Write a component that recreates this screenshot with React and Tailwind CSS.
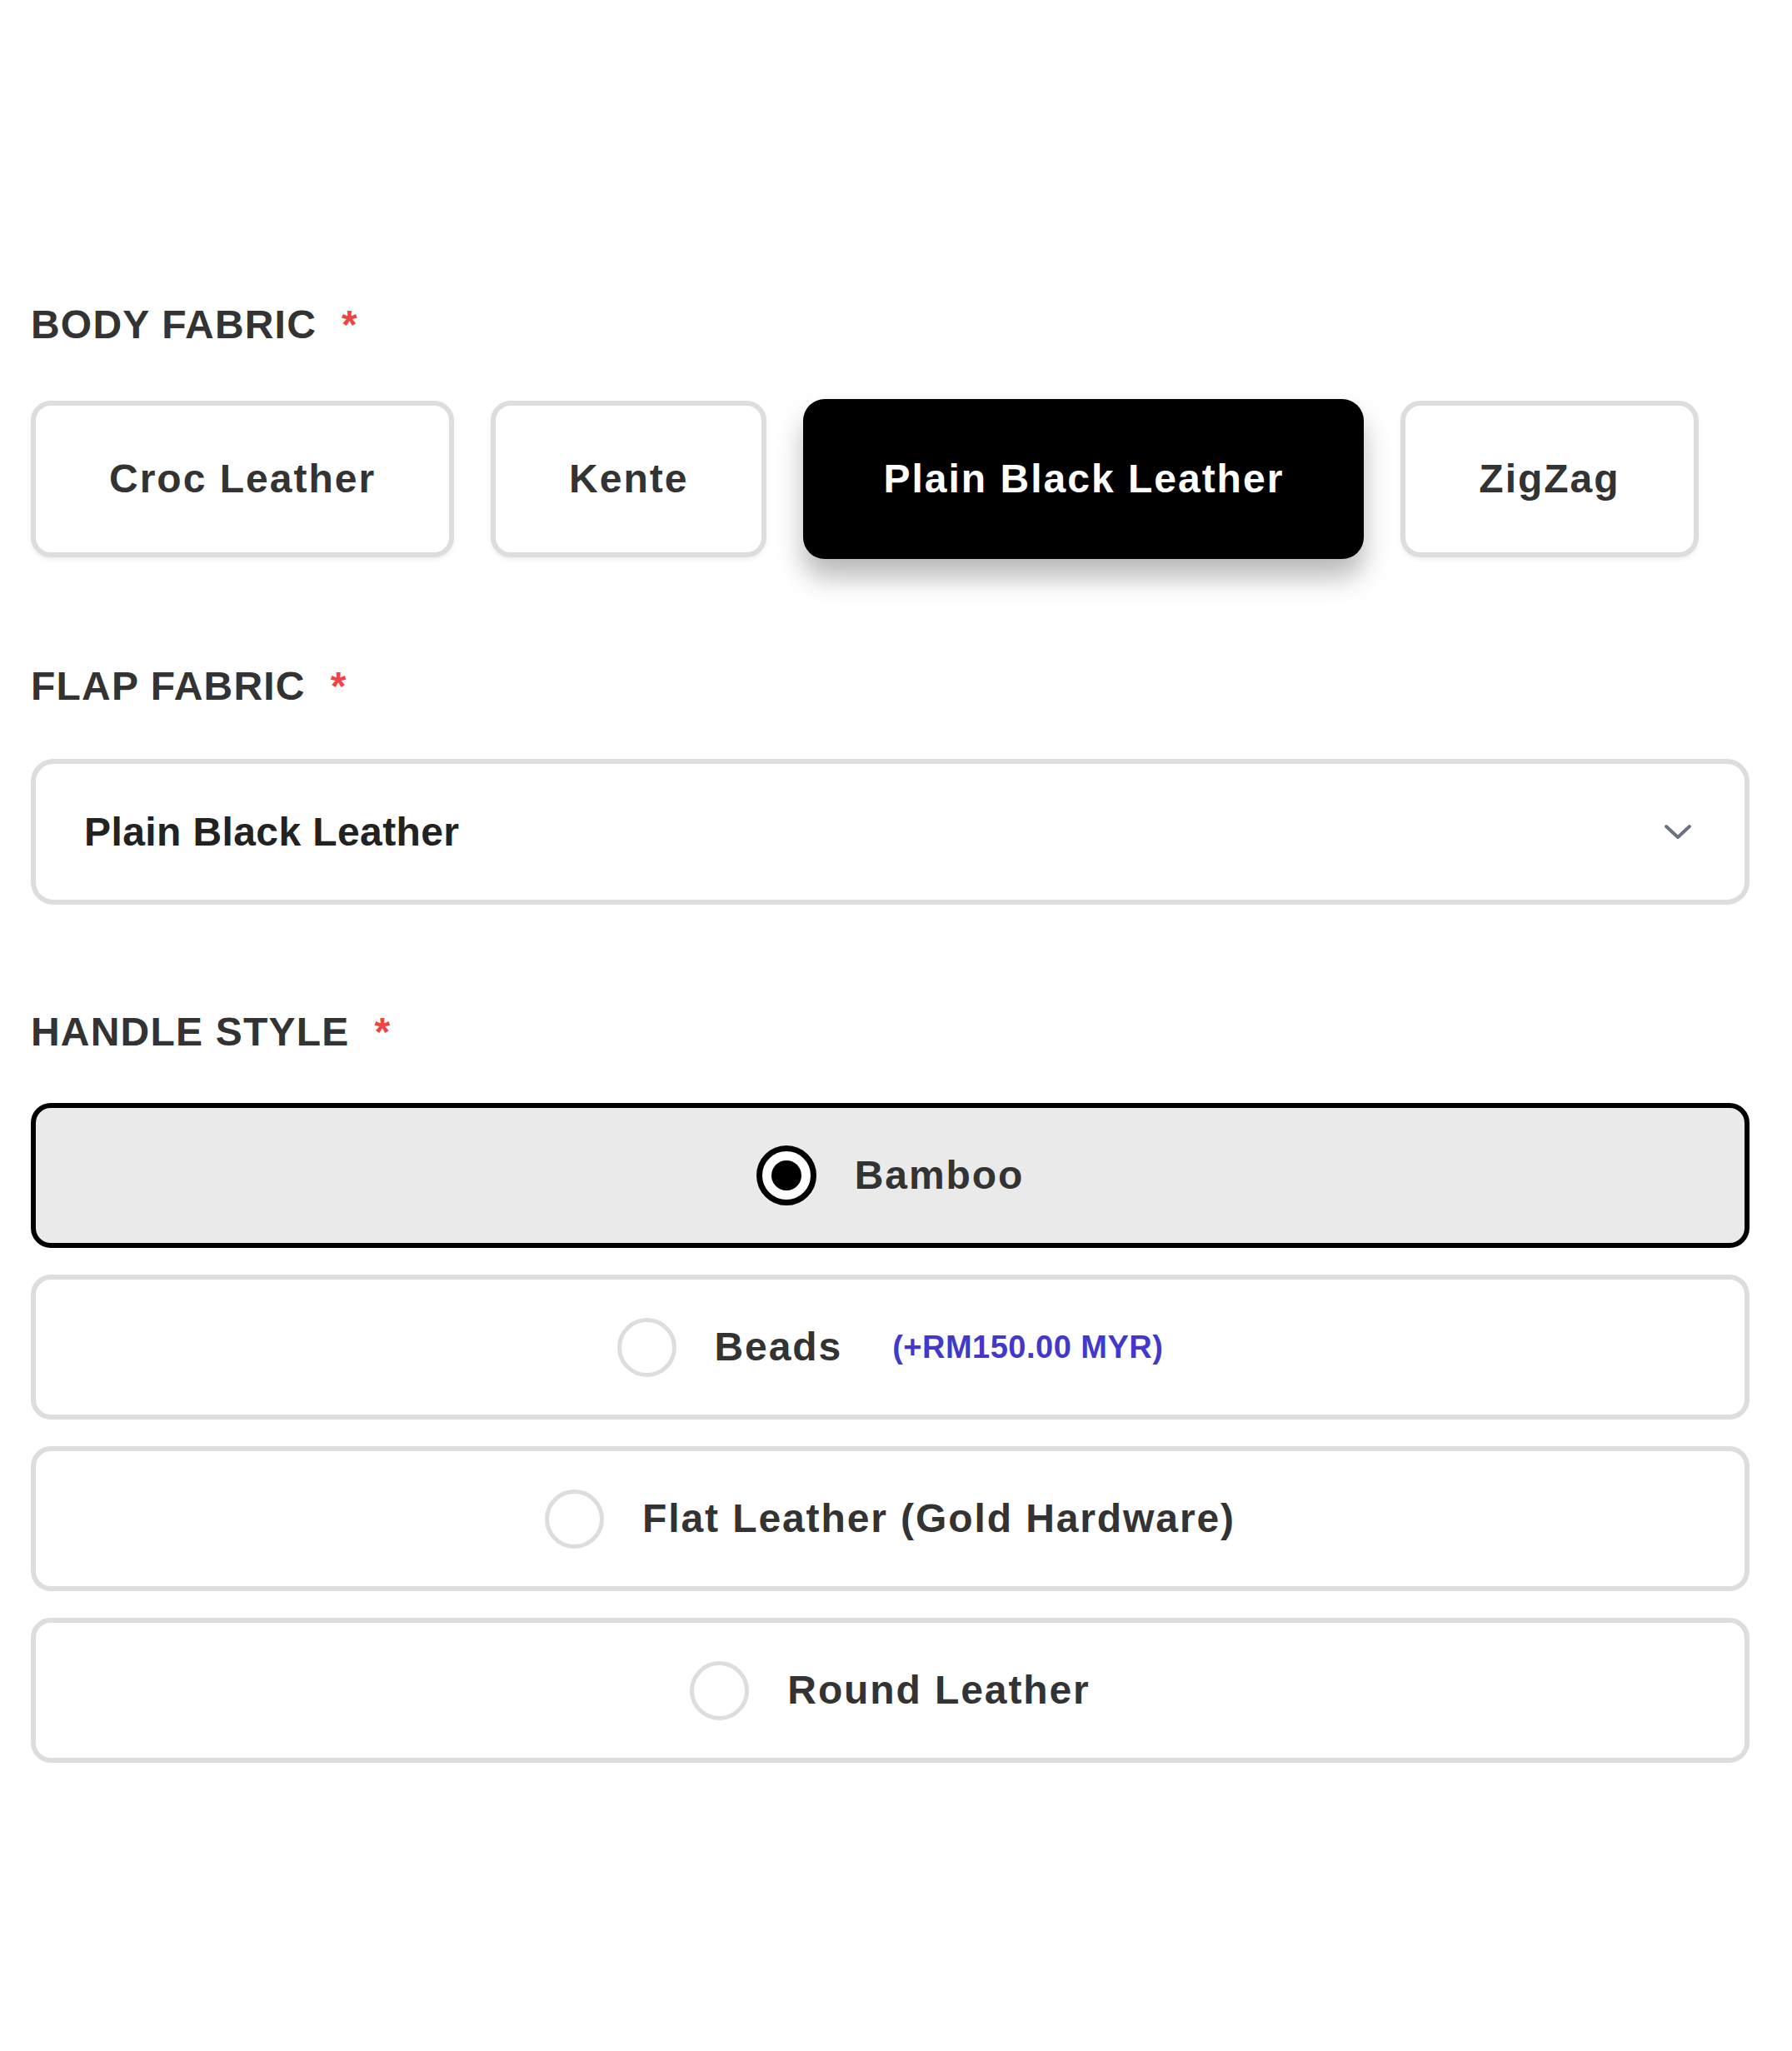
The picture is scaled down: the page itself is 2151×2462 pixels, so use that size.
import React from 'react'

const bodyFabrics = ['Croc Leather', 'Kente', 'Plain Black Leather', 'ZigZag']

const handleStyles = [
    { name: 'Bamboo' },
    { name: 'Beads', price: '(+RM150.00 MYR)' },
    { name: 'Flat Leather (Gold Hardware)' },
    { name: 'Round Leather' },
]

function Label({ children }) {
    return (
        <div className="h-[58px] leading-[58px] flex items-center text-[48px] font-bold uppercase tracking-[1.2px] text-[#333333]">
            <span>{children}</span>
            <span className="ml-[30px] text-[#ef4444]">*</span>
        </div>
    )
}

function Radio({ checked }) {
    if (checked) {
        return (
            <div className="w-[72px] h-[72px] rounded-full border-[7px] border-black bg-white flex items-center justify-center shrink-0">
                <div className="w-[36px] h-[36px] rounded-full bg-black" />
            </div>
        )
    }
    return <div className="w-[71px] h-[71px] rounded-full border-[5px] border-[#dddddd] bg-white shrink-0" />
}

export default function App() {
    const selectedBody = 'Plain Black Leather'
    const selectedHandle = 'Bamboo'

    return (
        <div className="min-h-[2462px] bg-white pl-[37px] pr-[51px] pt-[361px]" style={{ fontFamily: '"Liberation Sans", Arial, sans-serif' }}>
            {/* body fabric */}
            <Label>Body Fabric</Label>
            <div className="mt-[60px] flex items-center gap-[44px]">
                {bodyFabrics.map((f) => (
                    f === selectedBody ? (
                        <div key={f} className="h-[192px] px-[96px] flex items-center rounded-[26px] bg-black text-white text-[48px] font-bold tracking-[2px] shadow-[0_22px_32px_rgba(0,0,0,0.28)]">
                            {f}
                        </div>
                    ) : (
                        <div key={f} className="h-[188px] px-[88px] flex items-center rounded-[24px] border-[6px] border-[#dddddd] bg-white text-[#333333] text-[48px] font-bold tracking-[2px] shadow-[0_3px_5px_rgba(0,0,0,0.06)]">
                            {f}
                        </div>
                    )
                ))}
            </div>

            {/* flap fabric */}
            <div className="mt-[124px]">
                <Label>Flap Fabric</Label>
            </div>
            <div className="mt-[58px] h-[175px] pl-[58px] pr-[63px] flex items-center justify-between rounded-[27px] border-[6px] border-[#dddddd] bg-white">
                <span className="text-[48px] font-bold text-[#222222] tracking-[0.4px]">Plain Black Leather</span>
                <svg width="34" height="20" viewBox="0 0 34 20" fill="none">
                    <path d="M3 3 L17 16 L31 3" stroke="#6b7280" strokeWidth="4" strokeLinecap="round" strokeLinejoin="round" />
                </svg>
            </div>

            {/* handle style */}
            <div className="mt-[124px]">
                <Label>Handle Style</Label>
            </div>
            <div className="mt-[56px] flex flex-col gap-[32px]">
                {handleStyles.map((h) => {
                    const checked = h.name === selectedHandle
                    return (
                        <div key={h.name} className={`h-[174px] flex items-center justify-center gap-[46px] rounded-[24px] border-[6px] ${checked ? 'border-black bg-[#eaeaea]' : 'border-[#dddddd] bg-white'}`}>
                            <Radio checked={checked} />
                            <div className="flex items-center">
                                <span className="text-[48px] font-bold tracking-[1.9px] text-[#333333]">{h.name}</span>
                                {h.price && (
                                    <span className="ml-[60px] text-[38px] font-bold tracking-[0.5px] text-[#4338ca]">{h.price}</span>
                                )}
                            </div>
                        </div>
                    )
                })}
            </div>
        </div>
    )
}
